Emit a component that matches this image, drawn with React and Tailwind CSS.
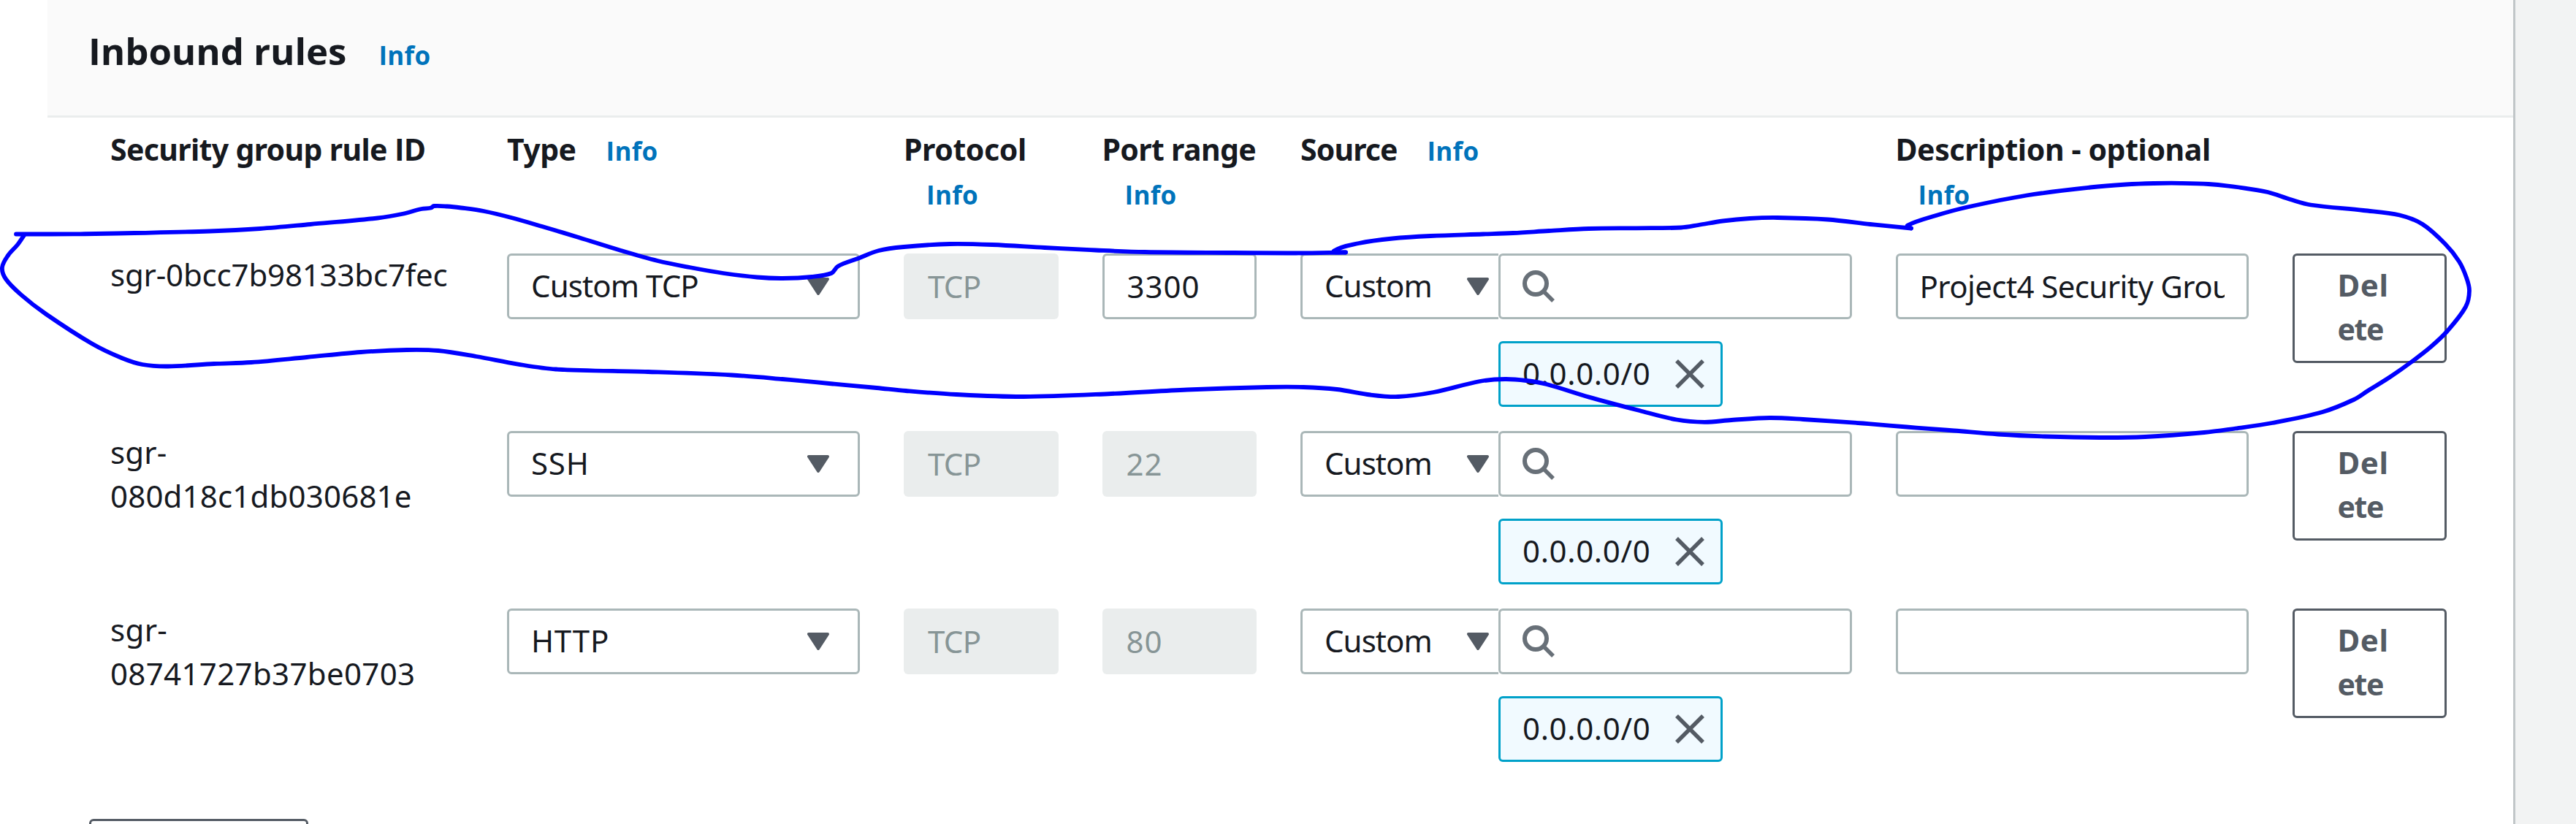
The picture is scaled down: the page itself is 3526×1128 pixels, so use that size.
const RULES = [
  {
    id: ["sgr-0bcc7b98133bc7fec"],
    idTracking: "tracking-[-0.18px]",
    type: "Custom TCP",
    typeTracking: "tracking-[-0.9px]",
    port: "3300",
    portEditable: true,
    description: true,
  },
  {
    id: ["sgr-", "080d18c1db030681e"],
    idTracking: "tracking-[0.18px]",
    type: "SSH",
    typeTracking: "tracking-[0.8px]",
    port: "22",
  },
  {
    id: ["sgr-", "08741727b37be0703"],
    idTracking: "tracking-[0.34px]",
    type: "HTTP",
    typeTracking: "tracking-[0.75px]",
    port: "80",
  },
];

const COLUMNS = [
  { label: "Security group rule", suffix: "ID", span: "col-span-2", tracking: "tracking-[-0.65px]" },
  { label: "Type", span: "col-span-2", tracking: "tracking-[-0.55px]", info: true },
  { label: "Protocol", span: "col-span-1", tracking: "tracking-[-0.4px]", info: true },
  { label: "Port range", span: "col-span-1", tracking: "tracking-[-0.65px]", info: true },
  { label: "Source", span: "col-span-3", tracking: "tracking-[-0.9px]", info: true },
  { label: "Description - optional", span: "col-span-2", tracking: "tracking-[-0.4px]", info: true },
];

// Pen strokes circling the first rule, as points along each stroke.
const PEN_STROKES = [
  [[22, 320.5], [49, 320.5], [110, 320.3], [184, 319], [287, 316.5], [356, 313], [425, 307], [517, 298.5], [550, 293], [577, 286], [590, 284.5], [594, 282], [612, 282.5], [631, 284.5], [662, 289], [700, 298], [742, 310], [792, 325], [850, 343], [900, 357], [944, 366], [990, 374], [1036, 379.5], [1071, 381], [1111, 379], [1138, 374], [1147, 364.5], [1174, 354], [1203, 343], [1237, 338], [1300, 334], [1358, 335], [1430, 339], [1500, 342.5], [1567, 345], [1688, 346], [1774, 346.5], [1842, 345.5]],
  [[1842, 345.5], [1826, 343.5], [1860, 333], [1906, 326.5], [1958, 323], [2030, 320.5], [2071, 319], [2120, 316], [2175, 313], [2240, 312.3], [2301, 311.5], [2325, 308], [2358, 302.5], [2395, 299], [2433, 298], [2502, 300.5], [2560, 307], [2616, 312.5]],
  [[2616, 312.5], [2611, 308.5], [2650, 295], [2693, 283.5], [2774, 267.5], [2861, 256.5], [2910, 252.5], [2948, 251], [2985, 250.8], [3023, 252], [3065, 256.5], [3104, 263], [3135, 273], [3163, 280.5], [3235, 288], [3284.5, 294.5], [3316, 307], [3347, 334], [3366, 358], [3376, 380], [3380, 398], [3375, 420], [3350, 453], [3327, 475], [3300, 496], [3270, 517], [3241, 535], [3222, 547], [3179, 564], [3110, 579], [3060, 586.5], [3017, 592], [2936, 598], [2874, 599], [2799, 597.5], [2735, 594.5], [2674.5, 589.5], [2610, 584.5], [2550, 579.5], [2468, 574], [2422, 572], [2370, 575], [2333, 577.8], [2295, 574.5], [2244, 562], [2175, 543.6], [2117, 526], [2089, 521], [2060, 519], [2025.5, 522], [1962, 537], [1914, 543], [1876, 540.5], [1830, 533], [1784, 530], [1734, 530], [1625, 533.5], [1521, 539], [1401, 543], [1309, 540], [1240, 535], [1200, 531], [1140, 525.5], [1071, 519], [1002, 513.5], [887, 509], [761, 505.5], [709, 498.6], [652, 488], [600, 480], [557, 479], [494, 482], [420, 489], [344, 496], [293, 498], [230, 501.5], [195, 499], [166.5, 490], [126, 470.5], [63, 430], [29, 403.6], [8, 382], [3, 366], [11.5, 349], [24, 335], [33, 322]],
];

function smoothPath(points) {
  let d = `M${points[0][0]} ${points[0][1]}`;
  for (let i = 0; i < points.length - 1; i++) {
    const p0 = points[Math.max(i - 1, 0)];
    const p1 = points[i];
    const p2 = points[i + 1];
    const p3 = points[Math.min(i + 2, points.length - 1)];
    const len = Math.hypot(p2[0] - p1[0], p2[1] - p1[1]);
    const handle = (a, b) => {
      const span = Math.hypot(b[0] - a[0], b[1] - a[1]) || 1;
      return [((b[0] - a[0]) / span) * (len / 3), ((b[1] - a[1]) / span) * (len / 3)];
    };
    const h1 = handle(p0, p2);
    const h2 = handle(p1, p3);
    d += `C${p1[0] + h1[0]} ${p1[1] + h1[1]} ${p2[0] - h2[0]} ${p2[1] - h2[1]} ${p2[0]} ${p2[1]}`;
  }
  return d;
}

function PenMarks() {
  return (
    <svg
      className="pointer-events-none absolute inset-0"
      width="3526"
      height="1128"
      fill="none"
      stroke="#0000ff"
      strokeWidth="5.8"
      strokeLinecap="round"
      strokeLinejoin="round"
    >
      {PEN_STROKES.map((points, i) => (
        <path key={i} d={smoothPath(points)} />
      ))}
    </svg>
  );
}

function Info() {
  return (
    <a className="ml-[31px] inline-block font-['Open_Sans',sans-serif] text-[35px] font-bold tracking-[0.3px] text-[#0073bb]">
      Info
    </a>
  );
}

function Caret() {
  return (
    <svg width="30" height="24" viewBox="0 0 30 24" className="shrink-0">
      <path d="M2 2H28L15 22Z" fill="#545b64" stroke="#545b64" strokeWidth="4" strokeLinejoin="round" />
    </svg>
  );
}

function SearchIcon() {
  return (
    <svg width="44" height="44" viewBox="0 0 44 44" fill="none" stroke="#687078" strokeWidth="6">
      <circle cx="18" cy="18" r="15" />
      <path d="M29 29L42 42" strokeWidth="5.5" />
    </svg>
  );
}

function CloseIcon() {
  return (
    <svg width="40" height="40" viewBox="0 0 40 40" stroke="#545b64" strokeWidth="5.5">
      <path d="M2 2L38 38M38 2L2 38" />
    </svg>
  );
}

function ReadOnly({ children, className }) {
  return (
    <div className={`flex h-[90px] items-center rounded-md bg-[#eaeded] pl-[33px] pb-px text-[#879596] ${className}`}>
      {children}
    </div>
  );
}

const FIELD = "flex h-[90px] items-center border-[3px] border-[#aab7b8] bg-white";

function RuleRow({ rule }) {
  return (
    <div className="grid h-[210px] grid-cols-12 gap-x-[60px]">
      <div className={`col-span-2 -mt-px ${rule.idTracking}`}>
        {rule.id.map((line) => (
          <div key={line} className="whitespace-nowrap">{line}</div>
        ))}
      </div>
      <div className={`${FIELD} col-span-2 justify-between rounded-md pr-[39px] pl-[30px]`}>
        <span className={`-mt-[3px] ${rule.typeTracking}`}>{rule.type}</span>
        <Caret />
      </div>
      <ReadOnly className="tracking-[-0.7px]">TCP</ReadOnly>
      {rule.portEditable ? (
        <div className={`${FIELD} rounded-md pb-px pl-[31px] tracking-[0.95px]`}>{rule.port}</div>
      ) : (
        <ReadOnly className="tracking-[1px]">{rule.port}</ReadOnly>
      )}
      <div className="col-span-3 flex items-start">
        <div className={`${FIELD} w-[271px] shrink-0 justify-between rounded-l-md border-r-0 pr-[13px] pl-[30px]`}>
          <span className="-mt-[3px] tracking-[-0.92px]">Custom</span>
          <Caret />
        </div>
        <div className="flex flex-1 flex-col items-start gap-[30px]">
          <div className={`${FIELD} w-full rounded-md pl-[30px]`}>
            <SearchIcon />
          </div>
          <div className="flex h-[90px] w-[307px] items-center justify-between rounded-md border-[3px] border-[#00a1c9] bg-[#f1faff] pr-[22px] pl-[30px]">
            <span className="-mt-[3px] tracking-[0.65px]">0.0.0.0/0</span>
            <CloseIcon />
          </div>
        </div>
      </div>
      <div className={`${FIELD} col-span-2 rounded-md px-[30px] pb-px`}>
        {rule.description && (
          <div className="w-full overflow-hidden whitespace-nowrap tracking-[-0.6px]">Project4 Security Group</div>
        )}
      </div>
      <div className="h-[150px] rounded-md border-[3px] border-[#545b64] pt-[10px] pl-[59px] font-bold text-[#545b64]">
        <div className="tracking-[0.6px]">Del</div>
        <div className="text-[41px] tracking-[-1.4px]">ete</div>
      </div>
    </div>
  );
}

export default function App() {
  return (
    <div className="relative flex h-[1128px] w-[3526px] overflow-hidden bg-white font-['Noto_Sans',sans-serif] text-[42px] leading-[60px] text-[#16191f]">
      <main className="ml-[65px] flex w-[3375px] shrink-0 flex-col">
        <header className="h-[161px] shrink-0 border-b-[3px] border-[#eaeded] bg-[#fafafa] pt-[39px] pl-14">
          <h2 className="font-['Open_Sans',sans-serif] text-[51px] font-bold tracking-[-0.1px]">
            Inbound rules <Info />
          </h2>
        </header>
        <div className="w-[3284px] shrink-0 pt-[13px] pl-[86px]">
          <div className="grid h-[173px] grid-cols-12 gap-x-[60px] text-[41px] font-bold">
            {COLUMNS.map((col) => (
              <div key={col.label} className={`${col.span} ${col.tracking}`}>
                {col.label} {col.suffix && <span className="font-['Open_Sans',sans-serif]">{col.suffix}</span>}
                {col.info && <Info />}
              </div>
            ))}
          </div>
          <div className="flex flex-col gap-[33px]">
            {RULES.map((rule) => (
              <RuleRow key={rule.type} rule={rule} />
            ))}
          </div>
        </div>
        <div className="mt-[78px] ml-[57px] h-[90px] w-[300px] shrink-0 rounded-md border-[3px] border-[#545b64]" />
      </main>
      <aside className="flex-1 border-l-[3px] border-[#c1c6c8] bg-[#f2f3f3]" />
      <PenMarks />
    </div>
  );
}
